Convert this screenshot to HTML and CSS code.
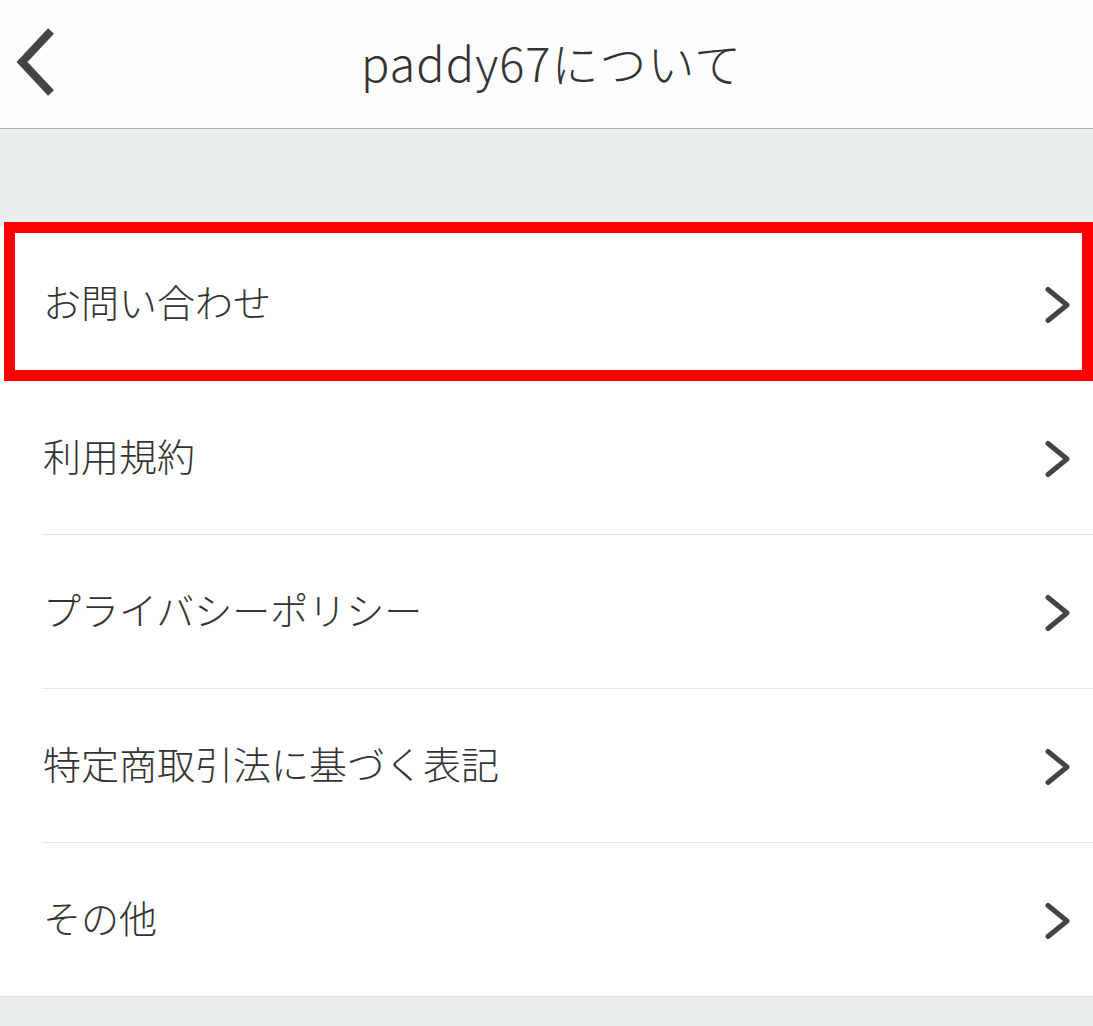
FILE: index.html
```html
<!DOCTYPE html>
<html lang="ja">
<head>
<meta charset="utf-8">
<link rel="stylesheet" href="styles.css">
</head>
<body>
<header class="nav">
  <span class="back">
    <svg width="44" height="70" viewBox="0 0 44 70"><path d="M37 4 L8 35 L37 66" fill="none" stroke="#444" stroke-width="8" stroke-linejoin="miter"/></svg>
  </span>
  <h1 class="title">paddy67について</h1>
</header>
<div class="spacer"></div>
<ul class="list">
  <li class="row highlighted"><span class="label">お問い合わせ</span><svg class="chev" width="26" height="38" viewBox="0 0 26 38"><path d="M3 3.5 L22 19 L3 34.5" fill="none" stroke="#444" stroke-width="5" stroke-linecap="round" stroke-linejoin="round"/></svg><span class="mark"></span></li>
  <li class="row"><span class="label">利用規約</span><svg class="chev" width="26" height="38" viewBox="0 0 26 38"><path d="M3 3.5 L22 19 L3 34.5" fill="none" stroke="#444" stroke-width="5" stroke-linecap="round" stroke-linejoin="round"/></svg></li>
  <li class="row"><span class="label">プライバシーポリシー</span><svg class="chev" width="26" height="38" viewBox="0 0 26 38"><path d="M3 3.5 L22 19 L3 34.5" fill="none" stroke="#444" stroke-width="5" stroke-linecap="round" stroke-linejoin="round"/></svg></li>
  <li class="row"><span class="label">特定商取引法に基づく表記</span><svg class="chev" width="26" height="38" viewBox="0 0 26 38"><path d="M3 3.5 L22 19 L3 34.5" fill="none" stroke="#444" stroke-width="5" stroke-linecap="round" stroke-linejoin="round"/></svg></li>
  <li class="row last"><span class="label">その他</span><svg class="chev" width="26" height="38" viewBox="0 0 26 38"><path d="M3 3.5 L22 19 L3 34.5" fill="none" stroke="#444" stroke-width="5" stroke-linecap="round" stroke-linejoin="round"/></svg></li>
</ul>
<div class="footer"></div>
</body>
</html>
```

FILE: styles.css
```css
html, body {
  margin: 0;
  padding: 0;
  background: #eceff0;
  font-family: "Noto Sans CJK JP", "Noto Sans", sans-serif;
  color: #444;
}
.nav {
  height: 128px;
  background: #fdfdfd;
  border-bottom: 1px solid #b3b3b3;
  display: flex;
  align-items: center;
  justify-content: center;
  position: relative;
}
.back {
  position: absolute;
  left: 14px;
  top: 27px;
  display: flex;
}
.title {
  margin: 0;
  font-weight: 300;
  font-size: 47px;
  letter-spacing: 1px;
  color: #333;
  line-height: 1;
  padding-bottom: 6px;
  padding-left: 10px;
}
.spacer {
  height: 98px;
}
.list {
  list-style: none;
  margin: 0;
  padding: 0 0 0 42px;
  background: #fff;
  border-bottom: 1px solid #e3e3e3;
}
.row {
  position: relative;
  height: 153px;
  border-bottom: 1px solid #e6e6e6;
  display: flex;
  align-items: center;
  justify-content: space-between;
  padding-right: 22px;
}
.row.last {
  border-bottom: none;
  height: 153px;
}
.label {
  font-size: 38px;
  font-weight: 300;
  padding-left: 1px;
  padding-bottom: 6px;
  line-height: 1;
  color: #333;
}
.chev {
  display: block;
  margin-top: 2px;
}
.mark {
  position: absolute;
  left: -38px;
  right: 0;
  top: -5px;
  height: 137px;
  border: 11px solid #ff0000;
  pointer-events: none;
}
.footer {
  height: 40px;
}
```
